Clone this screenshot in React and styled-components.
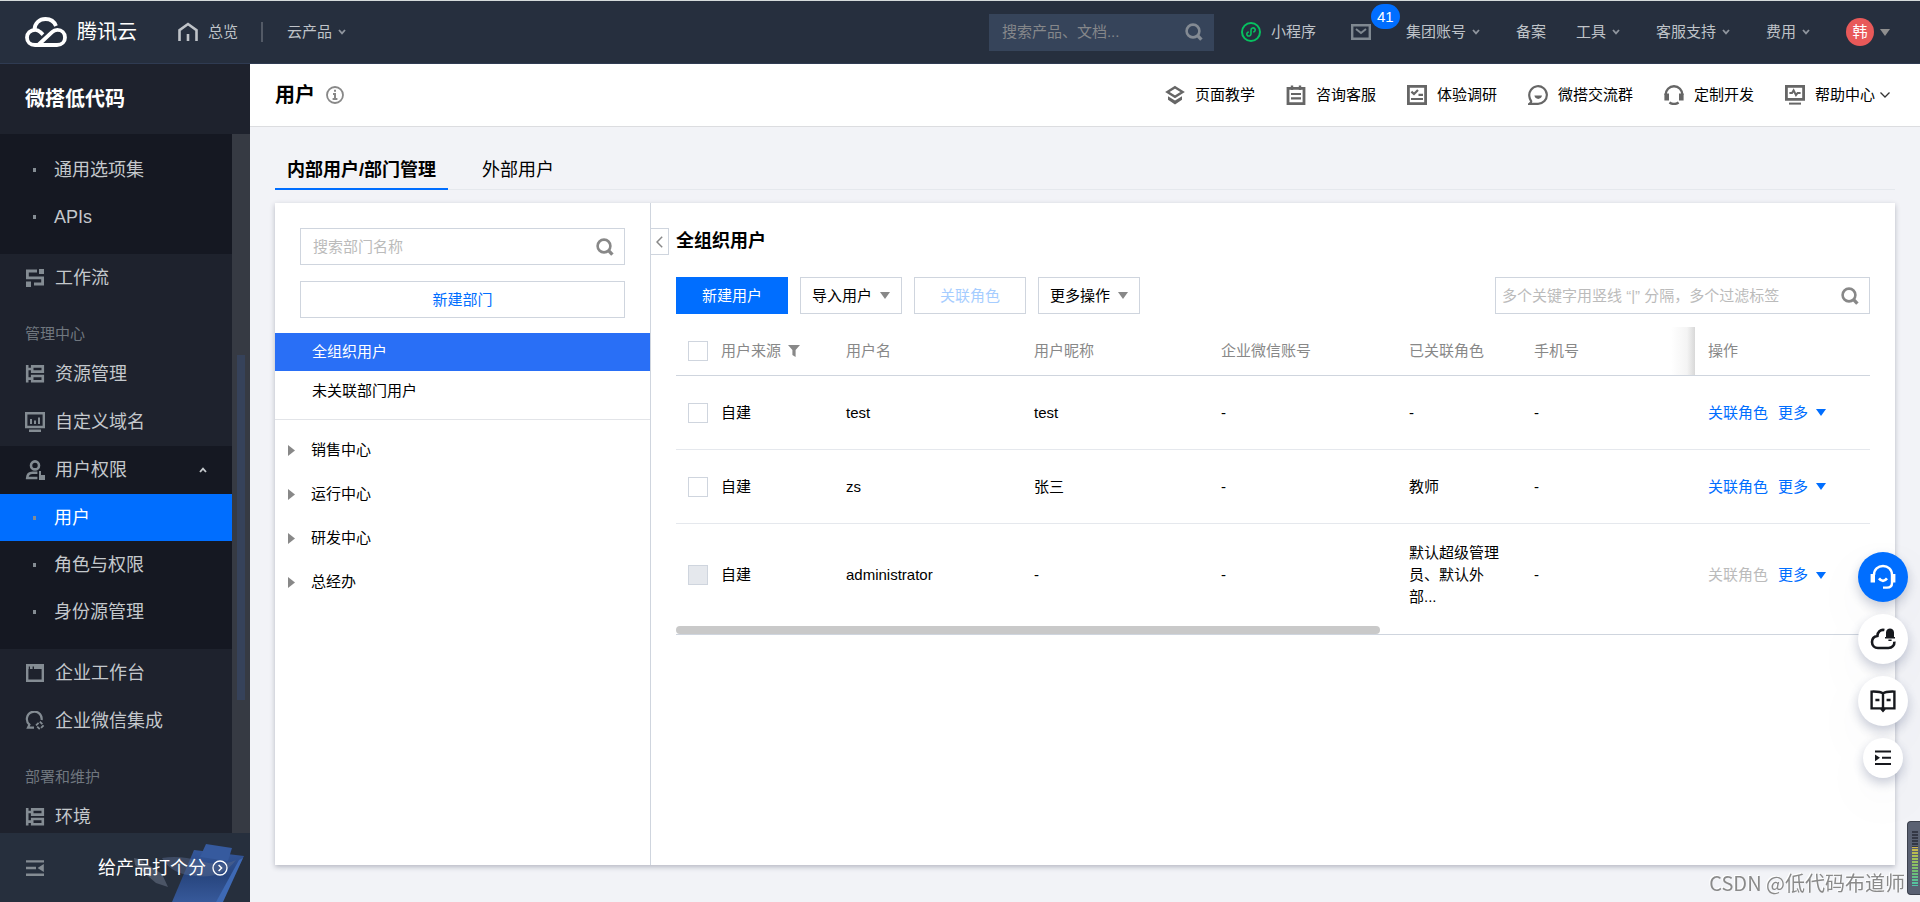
import React from 'react';
import styled, { createGlobalStyle, css } from 'styled-components';

const GlobalStyle = createGlobalStyle`
    * {
        box-sizing: border-box;
    }
    body {
        margin: 0;
        background: #f2f3f7;
        color: #000;
        font-family: "Liberation Sans", "Noto Sans CJK SC", sans-serif;
        font-size: 15px;
        line-height: 22px;
    }
    button, input {
        font: inherit;
        color: inherit;
        border: 0;
        padding: 0;
        background: none;
    }
    button {
        cursor: pointer;
    }
    a {
        color: inherit;
        text-decoration: none;
    }
    svg {
        display: block;
        flex: none;
    }
    h1, h2, ul {
        margin: 0;
        padding: 0;
        list-style: none;
    }
`;

/* ---------- icons ---------- */

const Icon = ({ size = 20, children }) => (
    <svg width={size} height={size} viewBox={`0 0 ${size} ${size}`} fill="none" stroke="currentColor" strokeWidth="2" aria-hidden="true">
        {children}
    </svg>
);

const LogoIcon = () => (
    <svg width="42" height="30" viewBox="0 0 42 30" fill="none" stroke="#fff" strokeWidth="3.8" aria-hidden="true">
        <path d="M9.5 13 C9.5 6 14.5 2 20.5 2 C25.5 2 29.3 4.6 31 9" />
        <path d="M18 17.6 L15.2 15 C13.8 13.6 12.2 12.9 10.3 12.9 C5.2 12.9 2 16.5 2 20.5 C2 24.8 5.2 28 10 28 H32 C37 28 40 24.6 40 20.4 C40 16 36.8 12.9 32.4 12.9 C30 12.9 28.4 13.8 27 15.2 L13.2 28" />
    </svg>
);

const HomeIcon = () => (
    <Icon>
        <path d="M1.5 19 V8.2 L10 2 L18.5 8.2 V19 M10 12 V19" strokeWidth="2.6" />
    </Icon>
);

const SearchIcon = () => (
    <Icon size={18}>
        <circle cx="8" cy="8" r="6.4" strokeWidth="2.6" />
        <path d="M12.4 12.4 L16.4 16.6" strokeWidth="3.4" />
    </Icon>
);

const Chevron = ({ up }) => (
    <svg width="8" height="6" viewBox="0 0 8 6" fill="none" stroke="currentColor" strokeWidth="1.8" aria-hidden="true">
        <path d={up ? 'M1 5 L4 1.6 L7 5' : 'M1 1 L4 4.4 L7 1'} />
    </svg>
);

const Caret = () => (
    <svg width="10" height="7" viewBox="0 0 10 7" fill="currentColor" aria-hidden="true">
        <path d="M0 0 H10 L5 7 Z" />
    </svg>
);

const RightCaret = () => (
    <svg width="7" height="11" viewBox="0 0 7 11" fill="#888" aria-hidden="true">
        <path d="M0 0 V11 L7 5.5 Z" />
    </svg>
);

const MiniIcon = () => (
    <svg width="20" height="20" viewBox="0 0 20 20" fill="none" stroke="#07c160" strokeWidth="2" aria-hidden="true">
        <circle cx="10" cy="10" r="9" />
        <path d="M7.8 10 C5.8 10.3 5.4 12 6.2 13.2 C7.4 14.8 10 13.9 10 11.8 V8.2 C10 6 12.6 5.2 13.8 6.8 C14.6 8 14.2 9.7 12.2 10" strokeWidth="1.6" />
    </svg>
);

const MailIcon = () => (
    <Icon>
        <path d="M1.2 3.2 H18.8 V16.8 H1.2 Z" strokeWidth="2.4" />
        <path d="M5 7 L10 11 L15 7" />
    </Icon>
);

const InfoIcon = () => (
    <Icon size={18}>
        <circle cx="9" cy="9" r="8" strokeWidth="1.8" />
        <path d="M8 4.8 H10 M7 8 H9 V13 M6.6 13 H11.4" />
    </Icon>
);

const LayersIcon = () => (
    <Icon>
        <path d="M10 2.2 L17.6 7 L10 11.8 L2.4 7 Z" strokeWidth="2.4" />
        <path d="M3 11.2 L10 15.6 L17 11.2 V14.8 L10 19.4 L3 14.8 Z" fill="currentColor" stroke="none" />
    </Icon>
);

const NoteIcon = () => (
    <Icon>
        <path d="M2 3.4 H18 V18.6 H2 Z" strokeWidth="2.8" />
        <path d="M6 0.5 V5 M14 0.5 V5" strokeWidth="2.4" />
        <path d="M5 9 H15 M5 13.4 H15" strokeWidth="2.2" />
    </Icon>
);

const SurveyIcon = () => (
    <Icon>
        <path d="M1.4 1.4 H18.6 V18.6 H1.4 Z" strokeWidth="2.8" />
        <path d="M4.4 6.6 L7 9 L11 5 M11.5 9.8 H16 M4 14 H16" strokeWidth="2.2" />
    </Icon>
);

const ChatIcon = () => (
    <Icon>
        <path d="M3.2 18.8 H10 A8.8 8.8 0 1 0 1.4 11.6 C1.6 14 2.8 15.4 3.2 16.2 Q3.4 17.4 1.4 18.8 Z" strokeWidth="2.2" />
        <path d="M6.4 10.6 H14 C13.4 15 7 15 6.4 10.6 Z" fill="currentColor" stroke="none" />
    </Icon>
);

const HeadsetIcon = () => (
    <Icon>
        <path d="M1.6 10 A8.4 8.8 0 0 1 18.4 10" strokeWidth="2.4" />
        <path d="M0.4 8.6 H5 V15.4 H0.4 Z M15 8.6 H19.6 V15.4 H15 Z" fill="currentColor" stroke="none" />
        <path d="M5.4 17.4 Q10 20.6 14.6 17.4" strokeWidth="2.4" />
    </Icon>
);

const MonitorIcon = () => (
    <Icon>
        <path d="M1.4 1.4 H18.6 V14.4 H1.4 Z" strokeWidth="2.8" />
        <path d="M4.4 8 H7 L8.6 5.4 L11 10.2 L12.6 8 H15.6" strokeWidth="2" />
        <path d="M4 18.6 H16" />
    </Icon>
);

const FlowIcon = () => (
    <Icon>
        <path d="M12 3 H2.4 V9.8 H17.6 V16 H9" strokeWidth="2.8" />
        <path d="M14 1 H19 V6 H14 Z M1 13.6 H6 V19 H1 Z" fill="currentColor" stroke="none" />
    </Icon>
);

const ResourceIcon = () => (
    <Icon>
        <path d="M2.2 1 V18.6 M2.2 5 H7 M2.2 14.6 H7" strokeWidth="2.6" />
        <path d="M7.2 2.4 H17.8 V7.6 H7.2 Z M7.2 12 H17.8 V17.2 H7.2 Z" strokeWidth="2.6" />
    </Icon>
);

const DomainIcon = () => (
    <Icon>
        <path d="M1.2 1.2 H18.8 V15 H1.2 Z M4 18.8 H16" strokeWidth="2.4" />
        <path d="M6 7 V12 M10 8.6 V12 M14 5.4 V12" strokeWidth="2" />
    </Icon>
);

const UserIcon = () => (
    <Icon>
        <circle cx="10" cy="5.4" r="4" strokeWidth="2.6" />
        <path d="M12.4 12.8 H7.6 C4.4 12.8 2.4 14.6 2.2 18 H12.4" strokeWidth="2.6" />
        <path d="M14 15 H20 V20 H14 Z M14 11 H16 V15 H14 Z" fill="currentColor" stroke="none" />
    </Icon>
);

const WindowIcon = () => (
    <Icon>
        <path d="M2.2 2.2 H17.8 V17.8 H2.2 Z" strokeWidth="2.4" />
        <path d="M1 4.4 H3.6 M5 4.4 H7.6 M9 4.4 H19" strokeWidth="3" />
    </Icon>
);

const WecomIcon = () => (
    <Icon>
        <path d="M9 16.6 H3 L4.4 13.6 A7.4 7.4 0 1 1 16.6 9" strokeWidth="2.2" />
        <path d="M14.8 10.6 L18.6 14.4 L14.8 18.2 L11 14.4 Z" strokeWidth="1.8" strokeDasharray="3.6 1.8" />
    </Icon>
);

const FoldIcon = () => (
    <Icon>
        <path d="M1 3.4 H19 M1 10 H11 M1 16.8 H19" strokeWidth="2.4" />
        <path d="M18.8 6 V14 L12.6 10 Z" fill="currentColor" stroke="none" />
    </Icon>
);

const FilterIcon = () => (
    <svg width="12" height="12" viewBox="0 0 12 12" fill="#888" aria-hidden="true">
        <path d="M0 0 H12 L7.6 5 V12 L4.4 10 V5 Z" />
    </svg>
);

const GoIcon = () => (
    <Icon size={16}>
        <circle cx="8" cy="8" r="7" strokeWidth="1.3" />
        <path d="M6.6 5 L9.6 8 L6.6 11" strokeWidth="1.5" />
    </Icon>
);

const ServiceIcon = () => (
    <Icon size={26}>
        <path d="M4 11 C4 5.6 8 2 13 2 C18 2 22 5.6 22 11 V19 C22 22 20 23.6 17 23.6 H13" strokeWidth="2.4" />
        <path d="M0.6 10 H5 V18.6 H0.6 Z M21 10 H25.4 V18.6 H21 Z" fill="currentColor" stroke="none" />
        <path d="M9 14.4 Q13 19.4 17 14.4" strokeWidth="2.6" />
    </Icon>
);

const CloudBellIcon = () => (
    <Icon size={26}>
        <path d="M14.4 4 C10.4 3.2 7.4 6 7.4 10 C3.8 10.6 2 13 2 16 C2 19.8 4.6 22 8 22 H18.4 C22.2 22 24.6 19.4 24.4 15.6" strokeWidth="2.6" />
        <path d="M16 11 V6.4 C16 1.2 24 1.2 24 6.4 V11 H25 V12.4 H15 V11 Z M18.4 13.4 H21.6 V15 H18.4 Z" fill="currentColor" stroke="none" />
    </Icon>
);

const BookIcon = () => (
    <Icon size={26}>
        <path d="M13 5.4 C11 3.8 8 3.4 1.6 3.6 V20.4 H11 L13 22.6 L15 20.4 H24.4 V3.6 C18 3.4 15 3.8 13 5.4 Z M13 5.4 V21" strokeWidth="2.4" />
        <path d="M5.4 12 H9.4 M16.6 12 H20.6" strokeWidth="2.4" />
    </Icon>
);

const ExpandIcon = () => (
    <Icon size={18}>
        <path d="M1 2.6 H17 M8 8.8 H17 M1 15 H17" strokeWidth="2" />
        <path d="M1 5.4 V12.2 L6 8.8 Z" fill="currentColor" stroke="none" />
    </Icon>
);

/* ---------- data ---------- */

const topLinks = [
    { label: '集团账号', menu: true },
    { label: '备案' },
    { label: '工具', menu: true },
    { label: '客服支持', menu: true },
    { label: '费用', menu: true },
];

const helpLinks = [
    { label: '页面教学', icon: <LayersIcon /> },
    { label: '咨询客服', icon: <NoteIcon /> },
    { label: '体验调研', icon: <SurveyIcon /> },
    { label: '微搭交流群', icon: <ChatIcon /> },
    { label: '定制开发', icon: <HeadsetIcon /> },
    { label: '帮助中心', icon: <MonitorIcon />, menu: true },
];

const departments = ['销售中心', '运行中心', '研发中心', '总经办'];

const users = [
    { id: 1, name: 'test', nick: 'test', role: '-' },
    { id: 2, name: 'zs', nick: '张三', role: '教师' },
    { id: 3, name: 'administrator', nick: '-', role: '默认超级管理员、默认外部...', locked: true },
];

/* ---------- page ---------- */

const TopBar = () => (
    <TopBarHolder>
        <Brand href="#"><LogoIcon />腾讯云</Brand>
        <TopLink href="#"><HomeIcon />总览</TopLink>
        <TopDivider />
        <TopButton>云产品<Chevron /></TopButton>
        <TopSearch>
            <input type="text" aria-label="搜索产品、文档" placeholder="搜索产品、文档..." />
            <SearchIcon />
        </TopSearch>
        <TopRight>
            <TopLink href="#"><MiniIcon />小程序</TopLink>
            <MailButton aria-label="消息"><MailIcon /><Badge>41</Badge></MailButton>
            {topLinks.map((item) => (
                item.menu
                    ? <TopButton key={item.label}>{item.label}<Chevron /></TopButton>
                    : <TopLink key={item.label} href="#">{item.label}</TopLink>
            ))}
            <Account><Avatar>韩</Avatar><Caret /></Account>
        </TopRight>
    </TopBarHolder>
);

const Sidebar = () => (
    <SidebarHolder>
        <SidebarTitle>微搭低代码</SidebarTitle>
        <NavWrap>
            <Nav>
                <NavGroup $first>
                    <SubItem href="#">通用选项集</SubItem>
                    <SubItem href="#">APIs</SubItem>
                </NavGroup>
                <NavItem href="#"><FlowIcon />工作流</NavItem>
                <NavHeading>管理中心</NavHeading>
                <NavItem href="#"><ResourceIcon />资源管理</NavItem>
                <NavItem href="#"><DomainIcon />自定义域名</NavItem>
                <NavGroup>
                    <NavItem href="#"><UserIcon />用户权限<NavArrow><Chevron up /></NavArrow></NavItem>
                    <SubItem href="#" $active>用户</SubItem>
                    <SubItem href="#">角色与权限</SubItem>
                    <SubItem href="#">身份源管理</SubItem>
                </NavGroup>
                <NavItem href="#"><WindowIcon />企业工作台</NavItem>
                <NavItem href="#"><WecomIcon />企业微信集成</NavItem>
                <NavHeading>部署和维护</NavHeading>
                <NavItem href="#"><ResourceIcon />环境</NavItem>
            </Nav>
            <NavTrack><NavThumb /></NavTrack>
        </NavWrap>
        <SidebarFooter>
            <FooterArt viewBox="0 0 120 69" aria-hidden="true">
                <defs>
                    <linearGradient id="board" x1="0" y1="0" x2="0" y2="1">
                        <stop offset="0" stopColor="#34579b" />
                        <stop offset="0.5" stopColor="#28467f" />
                        <stop offset="1" stopColor="#37599a" />
                    </linearGradient>
                </defs>
                <path d="M4 25 L9 26 L32 41 L38 54 L26 50 L5 32 Z" fill="#4b5566" />
                <path d="M64 17 L114 23 L90 69 H42 Z" fill="url(#board)" />
                <path d="M109 27 L113 25 L93 69 H86 Z" fill="#3e69b4" />
                <path d="M76 11 L102 15 L98 28 L70 24 Z" fill="#365a9e" />
                <path d="M32 25 Q50 22 70 28 Q90 34 106 27 Q92 46 66 43 Q42 42 32 25 Z" fill="#56688c" opacity="0.5" />
            </FooterArt>
            <FoldButton aria-label="收起菜单"><FoldIcon /></FoldButton>
            <RateLink href="#">给产品打个分<GoIcon /></RateLink>
        </SidebarFooter>
    </SidebarHolder>
);

const DepartmentPanel = () => (
    <DeptPanel>
        <DeptTools>
            <SearchBox>
                <input type="text" aria-label="搜索部门名称" placeholder="搜索部门名称" />
                <SearchIcon />
            </SearchBox>
            <Button $tone="link" $block>新建部门</Button>
        </DeptTools>
        <DeptList>
            <DeptItem $active>全组织用户</DeptItem>
            <DeptItem>未关联部门用户</DeptItem>
        </DeptList>
        <Tree>
            {departments.map((name) => (
                <li key={name}><TreeItem><RightCaret />{name}</TreeItem></li>
            ))}
        </Tree>
    </DeptPanel>
);

const UserTable = () => (
    <TableWrap>
        <Table>
            <colgroup>
                <col width="32" />
                <col width="125" />
                <col width="188" />
                <col width="187" />
                <col width="188" />
                <col width="125" />
                <col />
                <col width="175" />
            </colgroup>
            <thead>
                <tr>
                    <CheckHead><Checkbox type="checkbox" aria-label="全选" /></CheckHead>
                    <Head><HeadFilter>用户来源<FilterIcon /></HeadFilter></Head>
                    <Head>用户名</Head>
                    <Head>用户昵称</Head>
                    <Head>企业微信账号</Head>
                    <Head>已关联角色</Head>
                    <Head $shade>手机号</Head>
                    <Head>操作</Head>
                </tr>
            </thead>
            <tbody>
                {users.map((user) => (
                    <tr key={user.id}>
                        <CheckCell>
                            <Checkbox type="checkbox" aria-label={`选择 ${user.name}`} disabled={user.locked} />
                        </CheckCell>
                        <Cell>自建</Cell>
                        <Cell>{user.name}</Cell>
                        <Cell>{user.nick}</Cell>
                        <Cell>-</Cell>
                        <Cell>{user.role}</Cell>
                        <Cell>-</Cell>
                        <Cell>
                            <Actions>
                                <TextButton disabled={user.locked}>关联角色</TextButton>
                                <TextButton>更多<Caret /></TextButton>
                            </Actions>
                        </Cell>
                    </tr>
                ))}
            </tbody>
        </Table>
        <TableThumb />
    </TableWrap>
);

const App = () => {
    const [tab, setTab] = React.useState('inner');

    return (
        <>
            <GlobalStyle />
            <Page>
                <TopBar />
                <Body>
                    <Sidebar />
                    <Main>
                        <PageHeader>
                            <PageTitle>用户</PageTitle>
                            <InfoIcon />
                            <HelpNav>
                                {helpLinks.map((item) => (
                                    <HelpLink key={item.label} href="#">
                                        {item.icon}
                                        <span>{item.label}</span>
                                        {item.menu && (
                                            <svg width="10" height="6" viewBox="0 0 10 6" fill="none" stroke="#333" strokeWidth="1.3" aria-hidden="true">
                                                <path d="M0.5 0.5 L5 5 L9.5 0.5" />
                                            </svg>
                                        )}
                                    </HelpLink>
                                ))}
                            </HelpNav>
                        </PageHeader>
                        <Content>
                            <Tabs role="tablist">
                                <Tab role="tab" $active={tab === 'inner'} onClick={() => setTab('inner')}>内部用户/部门管理</Tab>
                                <Tab role="tab" $active={tab === 'outer'} onClick={() => setTab('outer')}>外部用户</Tab>
                            </Tabs>
                            <Card>
                                <DepartmentPanel />
                                <UserPanel>
                                    <CollapseButton aria-label="收起">
                                        <svg width="7" height="12" viewBox="0 0 7 12" fill="none" stroke="#888" strokeWidth="1.5" aria-hidden="true">
                                            <path d="M6.2 0.8 L1 6 L6.2 11.2" />
                                        </svg>
                                    </CollapseButton>
                                    <PanelTitle>全组织用户</PanelTitle>
                                    <Toolbar>
                                        <Button $tone="primary">新建用户</Button>
                                        <Button $menu>导入用户<Caret /></Button>
                                        <Button $tone="link" disabled>关联角色</Button>
                                        <Button $menu>更多操作<Caret /></Button>
                                        <SearchBox $filter>
                                            <input type="text" aria-label="搜索用户" placeholder="多个关键字用竖线 “|” 分隔，多个过滤标签" />
                                            <SearchIcon />
                                        </SearchBox>
                                    </Toolbar>
                                    <UserTable />
                                </UserPanel>
                            </Card>
                        </Content>
                    </Main>
                </Body>
            </Page>
            <FloatBar>
                <FloatButton $primary aria-label="在线客服"><ServiceIcon /></FloatButton>
                <FloatButton aria-label="云通知"><CloudBellIcon /></FloatButton>
                <FloatButton aria-label="文档"><BookIcon /></FloatButton>
                <FloatButton $small aria-label="收起"><ExpandIcon /></FloatButton>
            </FloatBar>
            <Watermark>CSDN @低代码布道师</Watermark>
            <Meter />
        </>
    );
}

const Page = styled.div`
    display: flex;
    flex-direction: column;
    height: 100vh;
`;

const TopBarHolder = styled.header`
    display: flex;
    align-items: center;
    flex: none;
    height: 64px;
    padding: 0 30px 0 25px;
    background: #262f3e;
    border-top: 1px solid #d5dbdb;
    border-bottom: 1px solid #2f3b52;
    color: #bfc3c8;
    white-space: nowrap;
`;

const Brand = styled.a`
    display: flex;
    align-items: center;
    gap: 10px;
    margin-right: 41px;
    color: #fff;
    font-size: 20px;
`;

const TopLink = styled.a`
    display: flex;
    align-items: center;
    gap: 10px;
`;

const TopButton = styled.button`
    display: flex;
    align-items: center;

    svg {
        margin: 0 6px;
        color: #8f959e;
    }
`;

const TopDivider = styled.span`
    width: 2px;
    height: 20px;
    margin: 0 24px 0 23px;
    background: #535a66;
`;

const TopSearch = styled.div`
    display: flex;
    align-items: center;
    width: 225px;
    height: 37px;
    margin-left: auto;
    padding: 0 11px 0 13px;
    background: #36445a;

    input {
        flex: 1;
        min-width: 0;
        outline: none;
    }
    input::placeholder {
        color: #85878a;
    }
    svg {
        color: #838a93;
    }
`;

const TopRight = styled.nav`
    display: flex;
    align-items: center;
    gap: 30px;
    margin-left: 27px;
`;

const MailButton = styled.button`
    position: relative;
    margin: 0 5px;
    color: #7f8890;
`;

const Badge = styled.span`
    position: absolute;
    left: 20px;
    bottom: 13px;
    padding: 0 6px;
    border-radius: 13px;
    background: #006eff;
    color: #fff;
    line-height: 25px;
`;

const Account = styled.button`
    display: flex;
    align-items: center;
    gap: 6px;
    color: #8f8f8f;
`;

const Avatar = styled.span`
    width: 28px;
    border-radius: 50%;
    background: #e85959;
    color: #fff;
    line-height: 28px;
    text-align: center;
`;

const Body = styled.div`
    display: flex;
    flex: 1;
    min-height: 0;
`;

const SidebarHolder = styled.aside`
    display: flex;
    flex-direction: column;
    flex: none;
    width: 250px;
    background: #1e222d;
    color: #c4c8cc;
`;

const SidebarTitle = styled.h2`
    padding: 0 25px;
    color: #fff;
    font-size: 20px;
    line-height: 70px;
`;

const NavWrap = styled.div`
    display: flex;
    flex: 1;
    min-height: 0;
`;

const Nav = styled.nav`
    flex: 1;
    overflow: hidden;
    font-size: 18px;
`;

const NavTrack = styled.div`
    display: flex;
    justify-content: center;
    align-items: flex-end;
    width: 18px;
    padding-bottom: 133px;
    background: #363a43;
`;

const NavThumb = styled.div`
    width: 8px;
    height: 61%;
    background: #36425a;
`;

const NavGroup = styled.div`
    padding: ${(props) => (props.$first ? '12px' : '0')} 0 14px;
    background: #151822;
`;

const NavItem = styled.a`
    display: flex;
    align-items: center;
    gap: 10px;
    height: 48px;
    padding: 0 25px;

    svg {
        color: #848c93;
    }
`;

const NavArrow = styled.span`
    margin-left: auto;

    svg {
        color: #c4c8cc;
    }
`;

const SubItem = styled.a`
    display: flex;
    align-items: center;
    gap: 18px;
    height: 47px;
    padding: 0 33px;
    color: ${(props) => (props.$active ? '#fff' : 'inherit')};
    background: ${(props) => (props.$active ? '#006eff' : 'none')};

    &::before {
        content: "";
        width: 3px;
        height: 4px;
        background: #848c93;
    }
`;

const NavHeading = styled.div`
    padding: 21px 25px 5px;
    color: #70777f;
    font-size: 15px;
`;

const SidebarFooter = styled.div`
    position: relative;
    display: flex;
    align-items: center;
    justify-content: space-between;
    height: 69px;
    padding: 0 22px 0 25px;
    background: #262f3d;
`;

const FooterArt = styled.svg`
    position: absolute;
    right: 0;
    bottom: 0;
    width: 120px;
    height: 69px;
`;

const FoldButton = styled.button`
    color: #848c93;
`;

const RateLink = styled.a`
    position: relative;
    display: flex;
    align-items: center;
    gap: 6px;
    color: #fff;
    font-size: 18px;
`;

const Main = styled.main`
    display: flex;
    flex-direction: column;
    flex: 1;
    min-width: 0;
`;

const PageHeader = styled.div`
    display: flex;
    align-items: center;
    flex: none;
    gap: 11px;
    height: 63px;
    padding: 0 30px 0 25px;
    background: #fff;
    border-bottom: 1px solid #dcdde0;

    > svg {
        color: #888;
    }
`;

const PageTitle = styled.h1`
    font-size: 20px;
`;

const HelpNav = styled.nav`
    display: flex;
    gap: 31px;
    margin-left: auto;
`;

const HelpLink = styled.a`
    display: flex;
    align-items: center;
    color: #000;

    svg {
        color: #666;
    }
    span {
        margin: 0 0 0 10px;
    }
    span + svg {
        margin-left: 5px;
    }
`;

const Content = styled.div`
    display: flex;
    flex-direction: column;
    flex: 1;
    padding: 24px 25px 37px;
`;

const Tabs = styled.div`
    display: flex;
    gap: 22px;
    margin-bottom: 13px;
    border-bottom: 1px solid #e5e8ed;
`;

const Tab = styled.button`
    height: 39px;
    margin-bottom: -1px;
    padding: 0 12px;
    border-bottom: 2px solid ${(props) => (props.$active ? '#006eff' : 'transparent')};
    font-size: 18px;
    font-weight: ${(props) => (props.$active ? 700 : 400)};
`;

const Card = styled.section`
    display: flex;
    flex: 1;
    background: #fff;
    box-shadow: 0 2px 5px rgba(54, 58, 80, 0.32);
`;

const DeptPanel = styled.div`
    flex: none;
    width: 376px;
    border-right: 1px solid #cfd5de;
`;

const DeptTools = styled.div`
    display: flex;
    flex-direction: column;
    gap: 16px;
    padding: 25px 25px 15px;
`;

const SearchBox = styled.div`
    display: flex;
    align-items: center;
    width: ${(props) => (props.$filter ? '375px' : 'auto')};
    height: 37px;
    margin-left: ${(props) => (props.$filter ? 'auto' : '0')};
    padding: 0 10px 0 ${(props) => (props.$filter ? '6px' : '12px')};
    border: 1px solid #cfd5de;

    input {
        flex: 1;
        min-width: 0;
        outline: none;
    }
    input::placeholder {
        color: #bbb;
    }
    svg {
        color: #888;
    }
`;

const Button = styled.button`
    display: flex;
    align-items: center;
    justify-content: center;
    gap: 8px;
    width: ${(props) => (props.$block ? 'auto' : props.$menu ? '102px' : '112px')};
    height: 37px;
    border: 1px solid #cfd5de;
    background: #fff;

    svg {
        color: #888;
    }
    ${(props) => props.$tone === 'primary' && css`
        border-color: #006eff;
        background: #006eff;
        color: #fff;
    `}
    ${(props) => props.$tone === 'link' && css`
        color: #006eff;
    `}
    &:disabled {
        color: #a6cdff;
        cursor: default;
    }
`;

const DeptList = styled.div`
    display: grid;
    gap: 1px;
    padding-bottom: 9px;
    border-bottom: 1px solid #e2e4e8;
`;

const DeptItem = styled.button`
    height: 38px;
    padding: 0 37px;
    background: ${(props) => (props.$active ? '#296ff6' : 'none')};
    color: ${(props) => (props.$active ? '#fff' : '#000')};
    text-align: left;
`;

const Tree = styled.ul`
    padding: 8px 13px;
`;

const TreeItem = styled.button`
    display: flex;
    align-items: center;
    gap: 16px;
    width: 100%;
    height: 44px;
`;

const UserPanel = styled.div`
    position: relative;
    flex: 1;
    min-width: 0;
    padding: 25px;
`;

const CollapseButton = styled.button`
    position: absolute;
    top: 25px;
    left: 0;
    display: flex;
    align-items: center;
    justify-content: center;
    width: 18px;
    height: 27px;
    border: 1px solid #cfd5de;
    border-left: 0;
`;

const PanelTitle = styled.h2`
    font-size: 18px;
    line-height: 26px;
`;

const Toolbar = styled.div`
    display: flex;
    gap: 12px;
    margin: 23px 0 13px;
`;

const TableWrap = styled.div`
    border-bottom: 1px solid #cfd5de;
`;

const Table = styled.table`
    width: 100%;
    table-layout: fixed;
    border-collapse: separate;
    border-spacing: 0;
`;

const Head = styled.th`
    height: 49px;
    padding: 0 13px;
    border-bottom: 1px solid #cfd5de;
    color: #888;
    font-weight: 400;
    text-align: left;
    ${(props) => props.$shade && css`
        background: linear-gradient(to left, #d8d8d8, #f4f4f4 8px, #fff 24px);
    `}
`;

const HeadFilter = styled.span`
    display: flex;
    align-items: center;
    gap: 7px;
`;

const CheckHead = styled(Head)`
    padding: 0 0 0 12px;
`;

const Cell = styled.td`
    height: 74px;
    padding: 18px 13px;

    tr:not(:last-child) > & {
        border-bottom: 1px solid #e5e8ed;
    }
`;

const CheckCell = styled(Cell)`
    padding: 0 0 0 12px;
`;

const Checkbox = styled.input`
    appearance: none;
    display: block;
    width: 20px;
    height: 20px;
    margin: 0;
    border: 1px solid #cfd5de;
    background: #fff;

    &:checked {
        border-color: #006eff;
        background: #006eff;
    }
    &:disabled {
        background: #e5e8ed;
    }
`;

const Actions = styled.div`
    display: flex;
    gap: 10px;
`;

const TextButton = styled.button`
    display: flex;
    align-items: center;
    gap: 8px;
    color: #006eff;

    &:disabled {
        color: #bbb;
    }
`;

const TableThumb = styled.div`
    width: 59%;
    height: 8px;
    border-radius: 4px;
    background: #c9c9c9;
`;

const FloatBar = styled.div`
    position: fixed;
    right: 12px;
    bottom: 124px;
    display: flex;
    flex-direction: column;
    align-items: center;
    gap: 12px;
`;

const FloatButton = styled.button`
    display: flex;
    align-items: center;
    justify-content: center;
    width: ${(props) => (props.$small ? '40px' : '50px')};
    height: ${(props) => (props.$small ? '40px' : '50px')};
    border-radius: 50%;
    background: ${(props) => (props.$primary ? '#006eff' : '#fff')};
    color: ${(props) => (props.$primary ? '#fff' : '#16181d')};
    box-shadow: 0 5px 12px rgba(55, 68, 110, 0.28), 0 20px 60px rgba(55, 68, 110, 0.05);
`;

const Watermark = styled.div`
    position: fixed;
    right: 15px;
    bottom: 5px;
    color: #8a8a8a;
    font-family: "Noto Sans CJK SC", sans-serif;
    font-size: 20px;
    line-height: 28px;
    text-shadow: -1px -1px 0 #fff;
`;

const Meter = styled.div`
    position: fixed;
    right: 0;
    bottom: 7px;
    width: 13px;
    height: 74px;
    border: 1px solid #3c414d;
    border-right: 0;
    border-radius: 4px 0 0 4px;
    background: #5a6172;

    &::before {
        content: "";
        position: absolute;
        top: 8px;
        right: 2px;
        bottom: 8px;
        width: 6px;
        background:
            repeating-linear-gradient(#5a6172 0 1px, transparent 1px 3px),
            linear-gradient(#343845 0 30%, #d2b548 30%, #a5c356 50%, #6fbf73 75%, #4fc3a8);
    }
`;

export default App;
